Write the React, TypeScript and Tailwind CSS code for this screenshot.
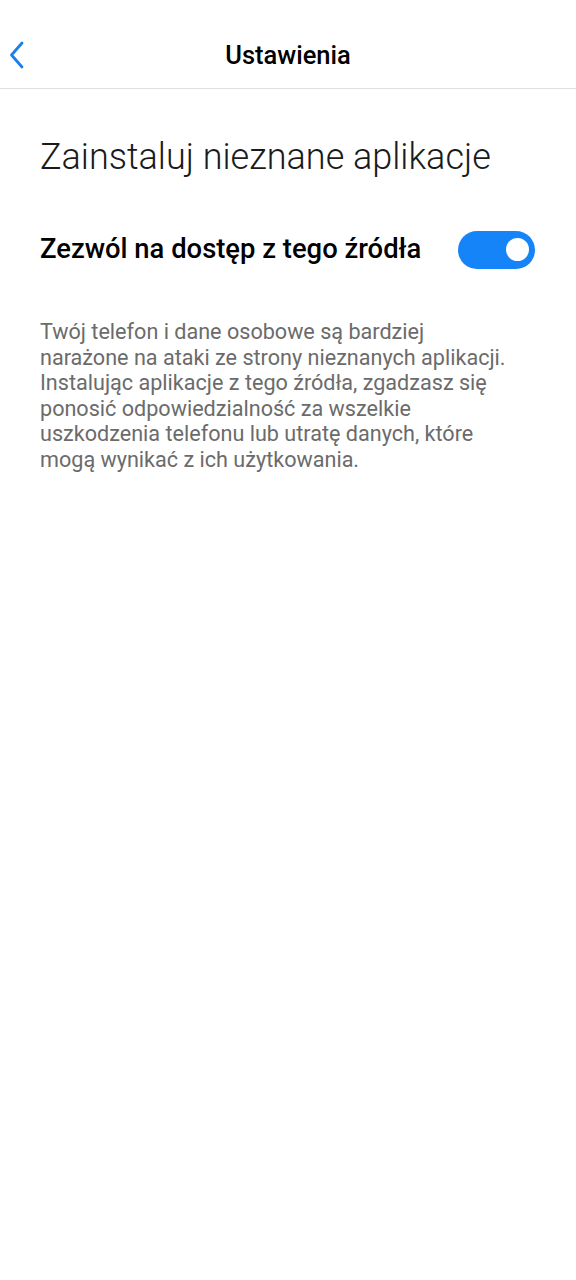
import { useState } from 'react'

function BackChevron() {
    return (
        <svg width="18" height="28" viewBox="0 0 18 28" fill="none">
            <path d="M14 2 L3.5 14 L14 26" stroke="#1a80e8" strokeWidth="2.8" strokeLinecap="round" strokeLinejoin="round" />
        </svg>
    )
}

function Toggle({ on, onChange }: { on: boolean; onChange: () => void }) {
    return (
        <button
            type="button"
            onClick={onChange}
            className={`flex h-[38px] w-[77px] shrink-0 items-center rounded-full px-[6px] ${on ? 'justify-end bg-[#1684f9]' : 'justify-start bg-[#d6d6d6]'}`}
        >
            <span className="block h-[23px] w-[23px] rounded-full bg-white" />
        </button>
    )
}

export default function App() {
    const [allowed, setAllowed] = useState(true)

    return (
        <div className="min-h-[1280px] w-full bg-white font-['Roboto',sans-serif]">
            {/* top bar */}
            <div className="relative flex h-[89px] items-center justify-center border-b border-[#e0e0e0]">
                <button type="button" className="absolute left-[8px] top-[41px]">
                    <BackChevron />
                </button>
                <h1 className="pt-[22px] text-[25.5px] font-medium text-black">Ustawienia</h1>
            </div>

            <div className="px-10">
                <h2 className="mt-[44px] text-[36px] font-light leading-[48px] text-[#1a1a1a]">
                    Zainstaluj nieznane aplikacje
                </h2>

                <div className="mt-[48px] flex items-center justify-between pr-[1px]">
                    <span className="text-[27.4px] font-medium text-black">Zezwól na dostęp z tego źródła</span>
                    <Toggle on={allowed} onChange={() => setAllowed(!allowed)} />
                </div>

                <p className="mt-[49px] text-[21.6px] leading-[25.6px] text-[#6b6b6b]">
                    Twój telefon i dane osobowe są bardziej
                    <br />
                    narażone na ataki ze strony nieznanych aplikacji.
                    <br />
                    Instalując aplikacje z tego źródła, zgadzasz się
                    <br />
                    ponosić odpowiedzialność za wszelkie
                    <br />
                    uszkodzenia telefonu lub utratę danych, które
                    <br />
                    mogą wynikać z ich użytkowania.
                </p>
            </div>
        </div>
    )
}
